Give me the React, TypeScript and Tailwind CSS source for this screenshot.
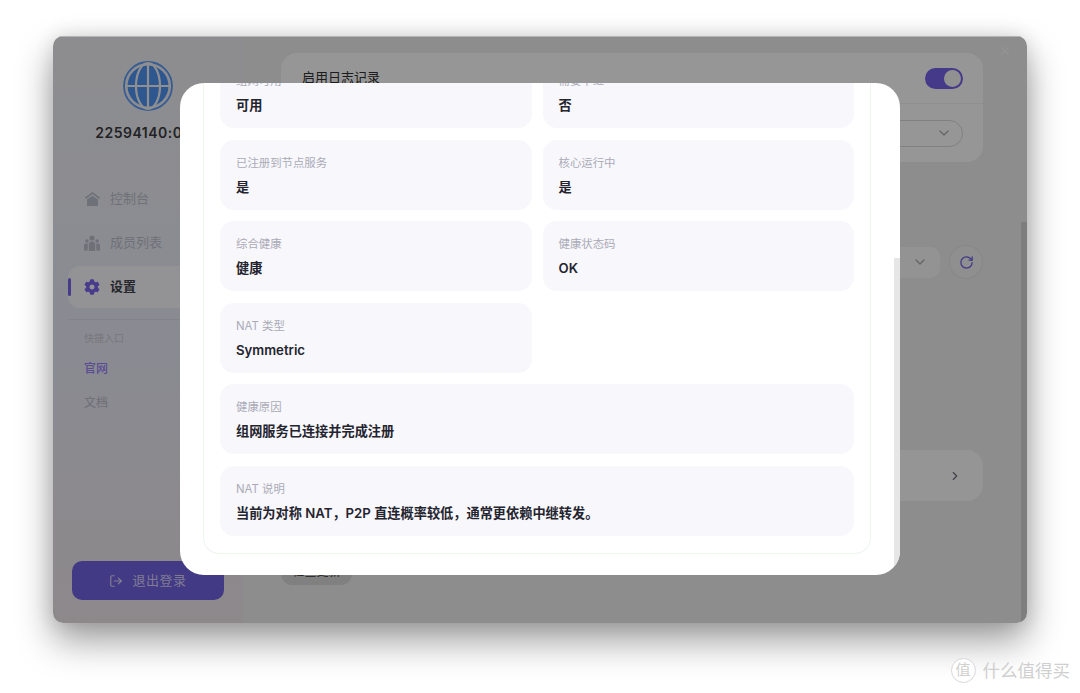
import { ChevronDown, ChevronRight, LogOut, RotateCw, X } from "lucide-react";
import { FaCog } from "react-icons/fa";

const font = "font-['Inter','Noto_Sans_CJK_SC',sans-serif]";

function GlobeLogo() {
  return (
    <svg width="50" height="50" viewBox="0 0 50 50" fill="none">
      <circle cx="25" cy="25" r="24" stroke="#5c9af5" strokeWidth="1.8" />
      <circle cx="25" cy="25" r="20.5" fill="#4e8fee" />
      <g stroke="#eeeff4" strokeWidth="2.2">
        <ellipse cx="25" cy="25" rx="12" ry="23" />
        <path d="M25 2v46M2 25h46" />
      </g>
    </svg>
  );
}

function HomeIcon() {
  return (
    <svg width="15" height="14" viewBox="0 0 15 14" fill="#b9bcc9">
      <path d="M7.500 0 15 5.600 14.100 6.900 7.500 2.100.9 6.900 0 5.600z" />
      <path d="M7.500 3.700 13 7.500V14H2V7.500z" />
    </svg>
  );
}

function UsersIcon() {
  return (
    <svg width="16" height="16" viewBox="0 0 16 16" fill="#b9bcc9">
      <circle cx="8" cy="3" r="2.600" />
      <circle cx="2.900" cy="6" r="1.800" />
      <circle cx="13.100" cy="6" r="1.800" />
      <path d="M4.800 16V9a2.800 2.800 0 0 1 2.800-2.500h.8A2.800 2.800 0 0 1 11.200 9v7z" />
      <path d="M0 15.500V10.500a2 2 0 0 1 2-2h1.800V15.500zM16 15.500V10.500a2 2 0 0 0-2-2h-1.800V15.500z" />
    </svg>
  );
}

function NavItem({ icon, label, active }: { icon: React.ReactNode; label: string; active?: boolean }) {
  return (
    <div
      className={`relative flex h-[42px] items-center gap-[10px] rounded-xl pl-[16px] text-[13px] ${
        active ? "bg-white/60 font-semibold text-[#3f3f4a]" : "text-[#b9bcc9]"
      }`}
    >
      {active && <span className="absolute left-0 top-[12px] h-[18px] w-[3px] rounded-full bg-[#7a63ea]" />}
      <span className="flex w-[16px] justify-center">{icon}</span>
      {label}
    </div>
  );
}

function Sidebar() {
  return (
    <aside className="flex h-full w-[190px] shrink-0 flex-col bg-gradient-to-b from-[#ececef] via-[#e6e8f4] to-[#ebe4e8] px-[15px] pt-[25px]">
      <div className="flex justify-center">
        <GlobeLogo />
      </div>
      <div className="mt-[12px] -translate-x-px whitespace-nowrap text-center text-[14px] font-semibold leading-5 tracking-[0.5px] text-[#3a3a3e]">
        22594140:001
      </div>
      <nav className="mt-[35px] flex flex-col gap-[2px]">
        <NavItem icon={<HomeIcon />} label="控制台" />
        <NavItem icon={<UsersIcon />} label="成员列表" />
        <NavItem icon={<FaCog size={16} color="#7a63ea" />} label="设置" active />
      </nav>
      <div className="mt-[11px] h-px bg-black/5" />
      <div className="mt-[11px] pl-[16px] text-[10px] leading-[14px] text-[#c6c6d2]">快捷入口</div>
      <div className="mt-[14px] flex flex-col gap-[14px] pl-[16px] text-[12px] leading-5">
        <span className="font-medium text-[#9680f5]">官网</span>
        <span className="text-[#b6b6c2]">文档</span>
      </div>
      <button className="mb-[23px] ml-[4px] mt-auto flex h-[39px] w-[152px] items-center justify-center gap-[9px] rounded-[10px] bg-[#7161e0] text-[13px] tracking-[0.5px] text-white/70">
        <LogOut size={14} />
        退出登录
      </button>
    </aside>
  );
}

function Settings() {
  return (
    <main className="relative flex h-full flex-1 flex-col overflow-hidden bg-[#ebebec] pl-[38px] pr-[44px]">
      <div className="-mt-[12px] text-[12px] leading-4 text-[#9680f5]">日志设置</div>
      <section className="mt-[13px] h-[109px] rounded-2xl bg-[#fbfbfb]">
        <div className="flex h-[51px] items-center justify-between border-b border-black/5 pl-[21px] pr-[20px]">
          <span className="text-[13px] text-[#2f2f33]">启用日志记录</span>
          <span className="flex h-[21px] w-[38px] items-center justify-end rounded-full bg-[#7361e6] pr-[2px]">
            <span className="h-[17px] w-[17px] rounded-full bg-[#f2f2f2]" />
          </span>
        </div>
        <div className="flex h-[58px] items-center justify-end pr-[20px]">
          <div className="flex h-[27px] w-[200px] items-center justify-end rounded-full border border-black/15 pr-[10px] text-[#aaaaaa]">
            <ChevronDown size={16} />
          </div>
        </div>
      </section>
      <div className="mt-[83px] flex h-[34px] items-center justify-end gap-[9px]">
        <div className="flex h-[31px] w-[200px] items-center justify-end rounded-[10px] bg-[#f6f6f6] pr-[12px] text-[#aaaaaa]">
          <ChevronDown size={16} />
        </div>
        <div className="flex h-[34px] w-[34px] items-center justify-center rounded-full border border-black/5 bg-[#eeeeee] text-[#6a5be0]">
          <RotateCw size={15} />
        </div>
      </div>
      <section className="mt-[171px] flex h-[51px] items-center justify-end rounded-2xl bg-[#f8f8f8] pr-[21px] text-[#6d6d78]">
        <ChevronRight size={14} />
      </section>
      <button className="mt-[61px] h-[23px] w-[71px] rounded-full bg-[#d6d6d6] pb-[4px] text-[12px] text-[#333333]">
        检查更新
      </button>
      <span className="absolute right-0 bottom-0 top-[186px] w-[6px] bg-black/10" />
      <X size={14} className="absolute right-[15px] top-[8px] text-white/60" />
    </main>
  );
}

function InfoCard({ label, value, wide }: { label: string; value: string; wide?: boolean }) {
  return (
    <div className={`h-[70px] rounded-[14px] bg-[#f7f7fc] px-4 pt-[14px] ${wide ? "col-span-2" : ""}`}>
      <div className="text-[11.4px] leading-[18px] text-[#ababb7]">{label}</div>
      <div className="mt-[6px] whitespace-nowrap text-[13.2px] font-semibold leading-[18px] text-[#24242e]">{value}</div>
    </div>
  );
}

function StatusModal() {
  return (
    <div className="absolute inset-0 flex items-center justify-center bg-black/40 pb-px">
      <div className="relative flex h-[492px] w-[720px] flex-col justify-end overflow-hidden rounded-[24px] bg-white pb-[21px] pl-[23px] pr-[29px]">
        <div className="rounded-b-2xl border border-t-0 border-[#edf5ed] px-4 pb-[17px]">
          <div className="grid grid-cols-2 gap-x-[11px] gap-y-[11.6px]">
            <InfoCard label="组网可用" value="可用" />
            <InfoCard label="需要中继" value="否" />
            <InfoCard label="已注册到节点服务" value="是" />
            <InfoCard label="核心运行中" value="是" />
            <InfoCard label="综合健康" value="健康" />
            <InfoCard label="健康状态码" value="OK" />
            <InfoCard label="NAT 类型" value="Symmetric" />
            <div />
            <InfoCard label="健康原因" value="组网服务已连接并完成注册" wide />
            <InfoCard label="NAT 说明" value="当前为对称 NAT，P2P 直连概率较低，通常更依赖中继转发。" wide />
          </div>
        </div>
        <span className="absolute bottom-0 right-0 top-[175px] w-[6px] bg-[#e6e6e6]" />
      </div>
    </div>
  );
}

export default function App() {
  return (
    <div className={`${font} relative h-[693px] w-[1080px] overflow-hidden bg-white pl-[53px] pt-[36px]`}>
      <div className="relative flex h-[587px] w-[974px] overflow-hidden rounded-[10px] shadow-[0_18px_36px_rgba(0,0,0,0.38),0_0_20px_rgba(0,0,0,0.12)]">
        <Sidebar />
        <Settings />
        <StatusModal />
        <span className="absolute inset-x-0 top-0 h-px bg-[#b4b4b4]" />
      </div>
      <div className="absolute bottom-[10px] right-[10px] flex items-center gap-[7px] text-[#cfcfcf]">
        <span className="flex h-[25px] w-[25px] items-center justify-center rounded-full border border-[#d8d8d8] bg-white text-[15px]">
          值
        </span>
        <span className="text-[17.5px] leading-6">什么值得买</span>
      </div>
    </div>
  );
}
